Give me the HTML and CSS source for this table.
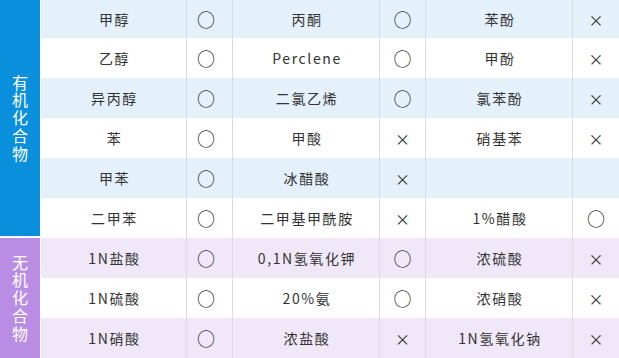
FILE: index.html
```html
<!DOCTYPE html>
<html lang="zh-CN">
<head>
<meta charset="utf-8">
<title>耐化学品性</title>
<link rel="stylesheet" href="styles.css">
</head>
<body>
<div class="chart">
  <section class="group organic">
    <div class="label"><span>有机化合物</span></div>
    <div class="rows">
      <div class="row"><div class="name">甲醇</div><div class="mark ok">○</div><div class="name">丙酮</div><div class="mark ok">○</div><div class="name">苯酚</div><div class="mark ng">×</div></div>
      <div class="row"><div class="name">乙醇</div><div class="mark ok">○</div><div class="name">Perclene</div><div class="mark ok">○</div><div class="name">甲酚</div><div class="mark ng">×</div></div>
      <div class="row"><div class="name">异丙醇</div><div class="mark ok">○</div><div class="name">二氯乙烯</div><div class="mark ok">○</div><div class="name">氯苯酚</div><div class="mark ng">×</div></div>
      <div class="row"><div class="name">苯</div><div class="mark ok">○</div><div class="name">甲酸</div><div class="mark ng">×</div><div class="name">硝基苯</div><div class="mark ng">×</div></div>
      <div class="row"><div class="name">甲苯</div><div class="mark ok">○</div><div class="name">冰醋酸</div><div class="mark ng">×</div><div class="name"></div><div class="mark"></div></div>
      <div class="row"><div class="name">二甲苯</div><div class="mark ok">○</div><div class="name">二甲基甲酰胺</div><div class="mark ng">×</div><div class="name">1%醋酸</div><div class="mark ok">○</div></div>
    </div>
  </section>
  <section class="group inorganic">
    <div class="label"><span>无机化合物</span></div>
    <div class="rows">
      <div class="row"><div class="name">1N盐酸</div><div class="mark ok">○</div><div class="name">0,1N氢氧化钾</div><div class="mark ok">○</div><div class="name">浓硫酸</div><div class="mark ng">×</div></div>
      <div class="row"><div class="name">1N硫酸</div><div class="mark ok">○</div><div class="name">20%氨</div><div class="mark ok">○</div><div class="name">浓硝酸</div><div class="mark ng">×</div></div>
      <div class="row"><div class="name">1N硝酸</div><div class="mark ok">○</div><div class="name">浓盐酸</div><div class="mark ng">×</div><div class="name">1N氢氧化钠</div><div class="mark ng">×</div></div>
    </div>
  </section>
</div>
</body>
</html>
```
FILE: styles.css
```css
html, body {
  margin: 0;
  padding: 0;
  background: #fff;
}
body {
  font-family: "Noto Sans CJK SC", "Noto Sans", sans-serif;
  color: #333;
  font-size: 14px;
}
.chart {
  width: 619px;
  display: flex;
  flex-direction: column;
}
.group {
  display: flex;
}
.label {
  width: 40px;
  flex: none;
  margin-right: 1px;
  border-bottom: 2px solid #fff;
  display: flex;
  align-items: center;
  justify-content: center;
  color: #fff;
  font-size: 16px;
  line-height: 17.75px;
}
.label span {
  width: 16px;
  text-align: center;
}
.organic .label { background: #0a8fdc; }
.inorganic .label { background: #b98de4; border-bottom: 0; }
.rows {
  flex: 1;
  display: flex;
  flex-direction: column;
}
.row {
  display: grid;
  grid-template-columns: 146px 46px 147px 46px 147px 46px;
  height: 40px;
}
.organic .row:first-child { height: 38px; }
.organic .row:nth-child(odd) { background: #e4f0fa; }
.inorganic .row:nth-child(odd) { background: #f0e8f8; }
.name, .mark {
  display: flex;
  align-items: center;
  justify-content: center;
  border-right: 1px solid #dcdcdc;
  letter-spacing: 1.6px;
  padding-left: 2px;
}
.mark {
  letter-spacing: 0;
  padding-left: 0;
  color: #2e2e2e;
}
.mark.ok { font-size: 18px; }
.mark.ng { font-size: 15px; }
.row > .mark:nth-child(2) { padding-right: 7px; }
.row > :last-child { border-right: 0; }
```
